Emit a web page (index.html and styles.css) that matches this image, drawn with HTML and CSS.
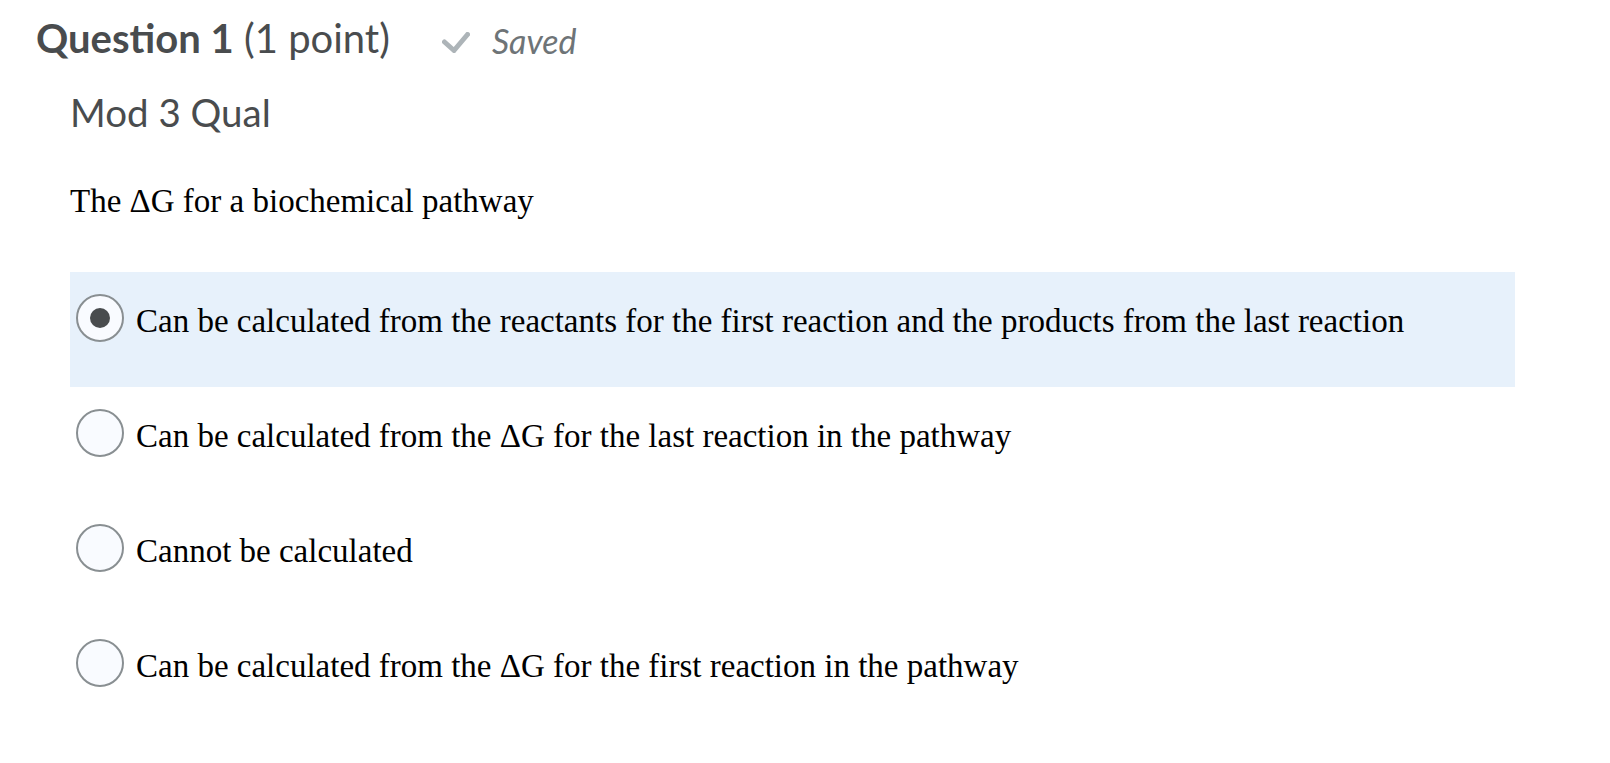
FILE: index.html
```html
<!DOCTYPE html>
<html>

<head>
	<title>Question 1</title>
	<meta charset="utf-8" />
	<link rel="stylesheet" href="styles.css">
</head>

<body>
	<div class="question">
		<div class="question-head">
			<h2 class="question-title"><strong>Question 1</strong> (1 point)</h2>
			<span class="saved">
				<svg class="saved-icon" width="28" height="21" viewBox="0 0 28 21">
					<polyline points="2.5,10 12,18.5 25.5,2.5" />
				</svg>
				Saved
			</span>
		</div>
		<div class="question-body">
			<h3 class="question-name">Mod 3 Qual</h3>
			<p class="question-text">The &Delta;G for a biochemical pathway</p>
			<ul class="choices">
				<li class="choice selected">
					<label><input type="radio" name="q1" value="1" checked> <span>Can be calculated from the reactants for the first reaction and the products from the last reaction</span></label>
				</li>
				<li class="choice">
					<label><input type="radio" name="q1" value="2"> <span>Can be calculated from the &Delta;G for the last reaction in the pathway</span></label>
				</li>
				<li class="choice">
					<label><input type="radio" name="q1" value="3"> <span>Cannot be calculated</span></label>
				</li>
				<li class="choice">
					<label><input type="radio" name="q1" value="4"> <span>Can be calculated from the &Delta;G for the first reaction in the pathway</span></label>
				</li>
			</ul>
		</div>
	</div>
</body>

</html>
```

FILE: styles.css
```css
/* general styles */
body {
	margin: 0;
	font-family: Lato, "Open Sans", sans-serif;
	color: #494c4e;
	background-color: #fff;
}

* {
	box-sizing: border-box;
}

/* question header */
.question {
	padding: 14px 0 0 36px;
}

.question-head {
	display: flex;
	align-items: baseline;
}

.question-title {
	margin: 0;
	font-size: 40px;
	font-weight: normal;
	line-height: 48px;
}

.question-title strong {
	font-weight: bold;
}

.saved {
	display: flex;
	align-items: center;
	margin-left: 52px;
	font-size: 34px;
	font-style: italic;
	color: #6e7477;
}

.saved-icon {
	margin: 5px 22px 0 0;
	fill: none;
	stroke: #adb4b8;
	stroke-width: 5;
	stroke-linecap: round;
	stroke-linejoin: round;
}

/* question body */
.question-body {
	padding-left: 34px;
}

.question-name {
	margin: 27px 0 0 0;
	font-size: 38.5px;
	font-weight: normal;
	line-height: 46px;
}

.question-text {
	margin: 46px 0 0 0;
	font-family: "Liberation Serif", "Times New Roman", serif;
	font-size: 33px;
	line-height: 40px;
	color: #000;
}

.choices {
	list-style: none;
	margin: 51px 0 0 0;
	padding: 0;
	width: 1445px;
}

.choice label {
	display: flex;
	align-items: flex-start;
	height: 115px;
	padding: 22px 0 0 6px;
	font-family: "Liberation Serif", "Times New Roman", serif;
	font-size: 33px;
	line-height: 40px;
	color: #000;
}

.choice.selected {
	background-color: #e7f1fb;
}

.choice span {
	margin-top: 7px;
}

input[type=radio] {
	appearance: none;
	display: grid;
	place-content: center;
	flex: none;
	width: 48px;
	height: 48px;
	margin: 0 12px 0 0;
	border: 2px solid #898f92;
	border-radius: 50%;
	background-color: #f9fbff;
}

input[type=radio]:checked::before {
	content: "";
	width: 20px;
	height: 20px;
	border-radius: 50%;
	background-color: #494c4e;
}
```
